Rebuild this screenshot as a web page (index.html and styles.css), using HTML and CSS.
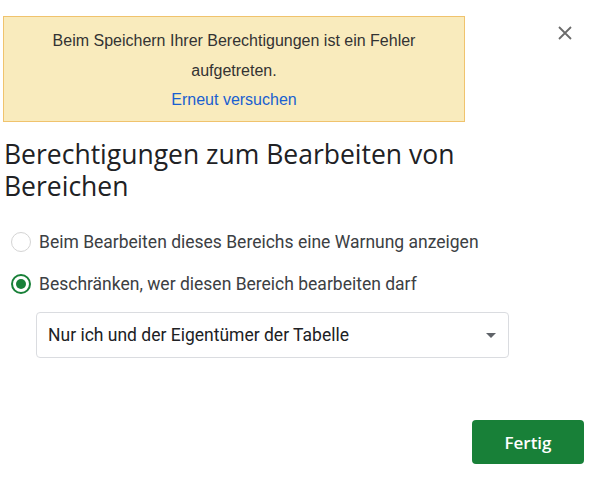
FILE: index.html
```html
<!DOCTYPE html>
<html lang="de">
<head>
<meta charset="utf-8">
<link rel="stylesheet" href="styles.css">
</head>
<body>
<div class="dialog">
  <div class="top">
    <div class="banner">
      <div class="banner-msg">Beim Speichern Ihrer Berechtigungen ist ein Fehler aufgetreten.</div>
      <a class="banner-link" href="#">Erneut versuchen</a>
    </div>
    <button class="close" aria-label="Schließen">
      <svg width="14" height="14" viewBox="0 0 14 14"><path d="M1 1L13 13M13 1L1 13" stroke="#6b6b6b" stroke-width="1.8" fill="none"/></svg>
    </button>
  </div>
  <h1 class="title">Berechtigungen zum Bearbeiten von Bereichen</h1>
  <div class="options">
    <label class="option"><span class="radio"></span><span class="option-text">Beim Bearbeiten dieses Bereichs eine Warnung anzeigen</span></label>
    <label class="option"><span class="radio checked"></span><span class="option-text">Beschränken, wer diesen Bereich bearbeiten darf</span></label>
  </div>
  <div class="select">
    <span class="select-text">Nur ich und der Eigentümer der Tabelle</span>
    <span class="caret"></span>
  </div>
  <div class="actions">
    <button class="done">Fertig</button>
  </div>
</div>
</body>
</html>
```
FILE: styles.css
```css
html, body {
  margin: 0;
  padding: 0;
  background: #fff;
}
.dialog {
  width: 602px;
  height: 480px;
  box-sizing: border-box;
  padding: 16px 18px 0 3px;
  display: flex;
  flex-direction: column;
}
.top {
  display: flex;
  align-items: flex-start;
}
.banner {
  width: 462px;
  height: 106px;
  box-sizing: border-box;
  background: #f9ebbd;
  border: 1px solid #f0c36d;
  padding: 9px 10px 0;
  text-align: center;
  font-family: "Liberation Sans", Arial, sans-serif;
  font-size: 16px;
  line-height: 30px;
  color: #333;
}
.banner-link {
  display: block;
  color: #1a5fd0;
  text-decoration: none;
  line-height: 28px;
}
.close {
  margin-left: auto;
  margin-top: 9px;
  margin-right: 11px;
  width: 16px;
  height: 16px;
  padding: 1px;
  border: 0;
  background: none;
  display: flex;
}
.title {
  margin: 16px 0 0 1px;
  max-width: 480px;
  font-family: "Open Sans", sans-serif;
  font-weight: 400;
  font-size: 26.5px;
  line-height: 32px;
  color: #202124;
}
.options {
  margin-top: 28px;
  display: flex;
  flex-direction: column;
  gap: 18px;
}
.option {
  display: flex;
  align-items: center;
  height: 24px;
  padding-left: 8px;
  font-family: Roboto, sans-serif;
  font-size: 17.5px;
  color: #3c4043;
}
.radio {
  width: 20px;
  height: 20px;
  box-sizing: border-box;
  border: 1.5px solid #d4d4d4;
  border-radius: 50%;
  margin-right: 8px;
  flex: none;
  display: flex;
  align-items: center;
  justify-content: center;
}
.radio.checked {
  border: 2px solid #188038;
}
.radio.checked::after {
  content: "";
  width: 10px;
  height: 10px;
  border-radius: 50%;
  background: #188038;
}
.select {
  margin: 16px 0 0 33px;
  width: 473px;
  height: 46px;
  box-sizing: border-box;
  border: 1px solid #dadce0;
  border-radius: 4px;
  display: flex;
  align-items: center;
  padding: 0 12px 0 11px;
  font-family: Roboto, sans-serif;
  font-size: 17.5px;
  color: #202124;
}
.select-text {
  flex: 1;
}
.caret {
  width: 0;
  height: 0;
  border-left: 5px solid transparent;
  border-right: 5px solid transparent;
  border-top: 5px solid #5f6368;
}
.actions {
  margin-top: 62px;
  display: flex;
  justify-content: flex-end;
}
.done {
  width: 112px;
  height: 44px;
  border: 0;
  border-radius: 4px;
  background: #188038;
  color: #fff;
  font-family: "Open Sans", sans-serif;
  font-weight: 600;
  font-size: 17px;
}
```
